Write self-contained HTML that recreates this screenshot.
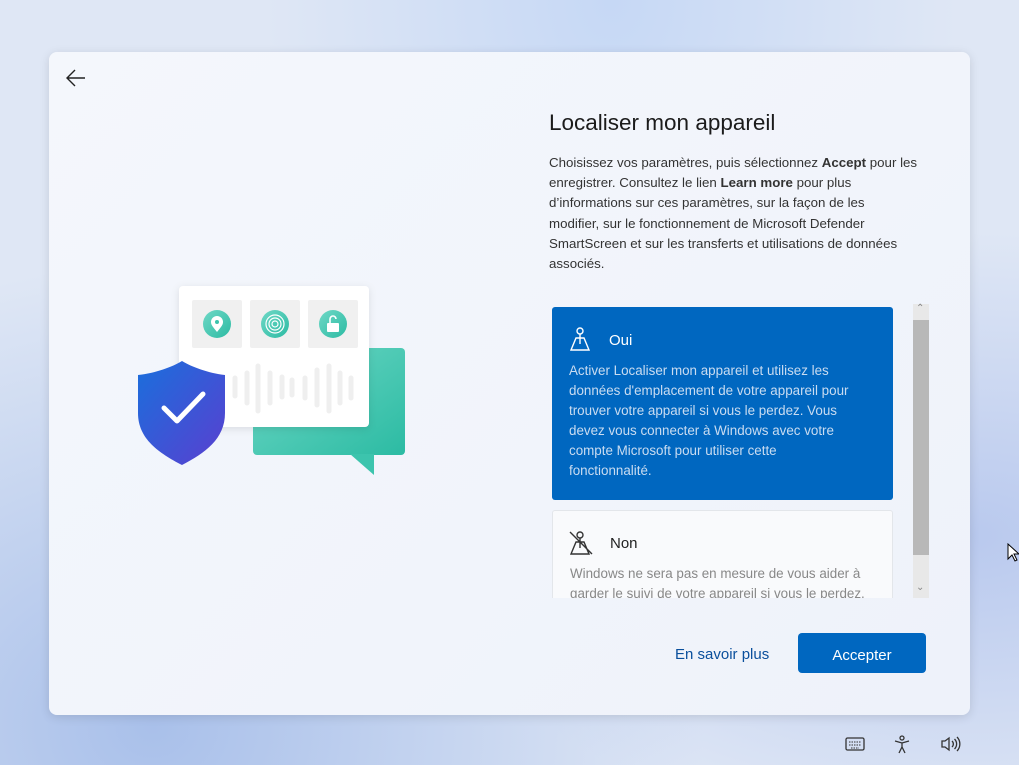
<!DOCTYPE html>
<html><head><meta charset="utf-8"><style>
*{margin:0;padding:0;box-sizing:border-box}
body{width:1019px;height:765px;overflow:hidden;font-family:"Liberation Sans",sans-serif;position:relative;
background:radial-gradient(ellipse at 15% 95%,#a9c0ea 0%,rgba(169,192,234,0) 45%),radial-gradient(ellipse at 95% 70%,#b9c9ee 0%,rgba(185,201,238,0) 40%),radial-gradient(ellipse at 60% 0%,#c6d8f5 0%,rgba(198,216,245,0) 40%),#dfe7f5;}
.card{position:absolute;left:49px;top:52px;width:921px;height:663px;border-radius:8px;background:linear-gradient(135deg,#f4f7fc,#f1f4fb 60%,#eef2fa);box-shadow:0 2px 10px rgba(0,0,0,.12)}
.abs{position:absolute}
h1{position:absolute;left:549px;top:110px;font-size:22.5px;font-weight:normal;color:#1b1b1b;white-space:nowrap}
.p{left:549px;top:153px;width:400px;font-size:13.3px;line-height:20.2px;color:#333;white-space:nowrap}
.opt1{left:552px;top:307px;width:341px;height:193px;background:#0067c0;border-radius:3px;color:#fff}
.opt2{left:552px;top:510px;width:341px;height:88px;background:#f9fafc;border:1px solid #e3e6ea;border-bottom:none;border-radius:3px 3px 0 0;overflow:hidden}
.otitle{position:absolute;left:57px;top:25px;font-size:15px}
.odesc{position:absolute;left:17px;top:54px;width:330px;font-size:13.4px;line-height:20px;white-space:nowrap}
</style></head><body>
<div class="card"></div>
<svg class="abs" style="left:65px;top:68px" width="22" height="20" viewBox="0 0 22 20"><path d="M20 10H2M10 2L2 10l8 8" fill="none" stroke="#222" stroke-width="1.4"/></svg>
<h1>Localiser mon appareil</h1>
<div class="abs p">Choisissez vos paramètres, puis sélectionnez <b>Accept</b> pour les<br>enregistrer. Consultez le lien <b>Learn more</b> pour plus<br>d’informations sur ces paramètres, sur la façon de les<br>modifier, sur le fonctionnement de Microsoft Defender<br>SmartScreen et sur les transferts et utilisations de données<br>associés.</div>

<svg class="abs" style="left:130px;top:280px" width="290" height="200" viewBox="0 0 290 200">
<defs>
<linearGradient id="g1" x1="0" y1="0" x2="1" y2="1"><stop offset="0" stop-color="#6fd8c6"/><stop offset="1" stop-color="#2cbba3"/></linearGradient>
<linearGradient id="g2" x1="0" y1="0" x2="1" y2="1"><stop offset="0" stop-color="#1a6fdc"/><stop offset="1" stop-color="#5a3fd0"/></linearGradient>
</defs>
<rect x="123" y="68" width="152" height="107" rx="4" fill="url(#g1)"/>
<path d="M220 174l24 21v-21z" fill="#3cc4ad"/>
<rect x="49" y="6" width="190" height="141" rx="4" fill="#fff" style="filter:drop-shadow(0 2px 4px rgba(0,0,0,.1))"/>
<rect x="62" y="20" width="50" height="48" rx="2" fill="#f0f0f0"/>
<rect x="120" y="20" width="50" height="48" rx="2" fill="#f0f0f0"/>
<rect x="178" y="20" width="50" height="48" rx="2" fill="#f0f0f0"/>
<circle cx="87" cy="44" r="14" fill="url(#g1)"/><path d="M87 52c-4-5-6-7-6-10a6 6 0 0 1 12 0c0 3-2 5-6 10z" fill="#fff"/><circle cx="87" cy="42" r="2" fill="#3cc4ad"/>
<circle cx="145" cy="44" r="14" fill="url(#g1)"/><g fill="none" stroke="#fff" stroke-width="1.2"><circle cx="145" cy="44" r="3"/><circle cx="145" cy="44" r="6"/><circle cx="145" cy="44" r="9"/></g>
<circle cx="203" cy="44" r="14" fill="url(#g1)"/><rect x="197" y="43" width="12" height="9" rx="1" fill="#fff"/><path d="M200 43v-4a3 3 0 0 1 6 0" fill="none" stroke="#fff" stroke-width="1.6"/>
<g stroke="#efefef" stroke-width="5" stroke-linecap="round">
<path d="M105 98v18M117 93v30M128 86v45M140 93v30M152 97v20M162 100v15M175 98v20M187 90v35M199 86v45M210 93v30M221 98v20"/></g>
<path d="M8 95c18-2 34-8 44-14 10 6 26 12 43 14v38c0 26-20 40-43 52C29 173 8 159 8 133z" fill="url(#g2)"/>
<path d="M34 128l13 13 26-27" fill="none" stroke="#fff" stroke-width="5" stroke-linecap="round" stroke-linejoin="round"/>
</svg>

<div class="abs opt1">
<svg class="abs" style="left:16px;top:20px" width="24" height="26" viewBox="0 0 24 26"><g fill="none" stroke="#fff" stroke-width="1.4"><circle cx="12" cy="4" r="3"/><path d="M12 7v10M8 11h8l5 12H3z"/></g></svg>
<div class="otitle">Oui</div>
<div class="odesc" style="color:#c9dcf1">Activer Localiser mon appareil et utilisez les<br>données d'emplacement de votre appareil pour<br>trouver votre appareil si vous le perdez. Vous<br>devez vous connecter à Windows avec votre<br>compte Microsoft pour utiliser cette<br>fonctionnalité.</div>
</div>
<div class="abs opt2">
<svg class="abs" style="left:15px;top:19px" width="26" height="26" viewBox="0 0 26 26"><g fill="none" stroke="#333" stroke-width="1.4"><circle cx="12" cy="5" r="3"/><path d="M12 8v10M8 12h8l5 12H3zM2 2l22 22"/></g></svg>
<div class="otitle" style="color:#222;top:24px">Non</div>
<div class="odesc" style="color:#888;top:53px">Windows ne sera pas en mesure de vous aider à<br>garder le suivi de votre appareil si vous le perdez.</div>
</div>
<div class="abs" style="left:913px;top:304px;width:16px;height:294px;background:#e8e8e8"></div>
<div class="abs" style="left:913px;top:320px;width:16px;height:235px;background:#b8b8b8"></div>
<div class="abs" style="left:916px;top:303px;font-size:10px;color:#888">&#8963;</div>
<div class="abs" style="left:916px;top:582px;font-size:10px;color:#888">&#8964;</div>

<div class="abs" style="left:675px;top:646px;font-size:15px;color:#0a4f9c">En savoir plus</div>
<div class="abs" style="left:798px;top:633px;width:128px;height:40px;background:#0067c0;border-radius:4px;color:#fff;font-size:15px;display:flex;align-items:center;justify-content:center;padding-top:4px">Accepter</div>

<svg class="abs" style="left:845px;top:737px" width="20" height="14" viewBox="0 0 20 14"><rect x="1" y="1" width="18" height="12" rx="1.5" fill="none" stroke="#333" stroke-width="1.3"/><path d="M4 5h12M4 8h12M6 11h8" stroke="#333" stroke-dasharray="1.5 1"/></svg>
<svg class="abs" style="left:893px;top:735px" width="18" height="19" viewBox="0 0 18 19"><g fill="none" stroke="#333" stroke-width="1.3"><circle cx="9" cy="3" r="2"/><path d="M2 6l7 2 7-2M9 8v4M6 18l3-6 3 6"/></g></svg>
<svg class="abs" style="left:940px;top:736px" width="21" height="16" viewBox="0 0 21 16"><g fill="none" stroke="#333" stroke-width="1.3"><path d="M2 5h3l4-3v12l-4-3H2z"/><path d="M12 5a4 4 0 0 1 0 6M14.5 3a7 7 0 0 1 0 10M17 1a10 10 0 0 1 0 14"/></g></svg>
<svg class="abs" style="left:1007px;top:543px" width="12" height="20" viewBox="0 0 12 20"><path d="M1 1v15l4-4 3 6 2-1-3-6h5z" fill="#fff" stroke="#000"/></svg>
</body></html>
